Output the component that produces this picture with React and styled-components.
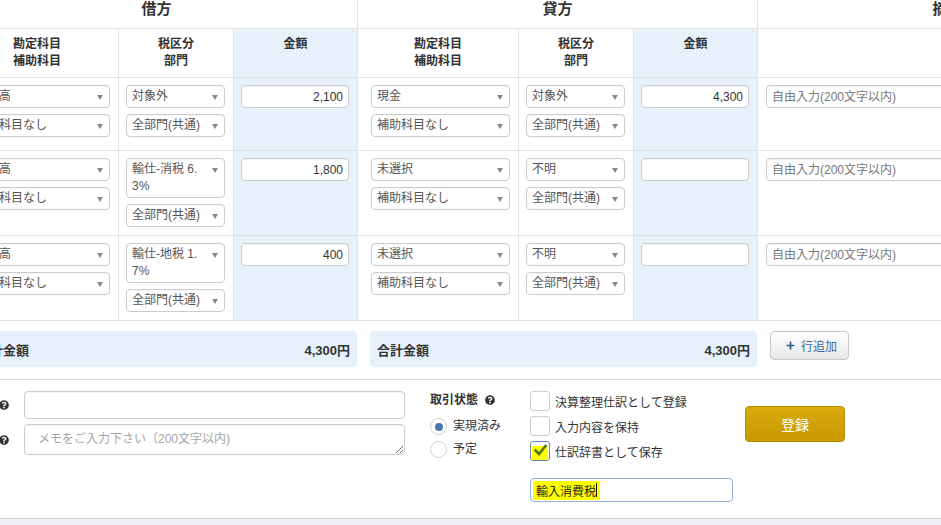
import React from 'react';
import styled, { createGlobalStyle } from 'styled-components';
import { FaQuestionCircle, FaPlus } from 'react-icons/fa';

const COLS = '163px 115px 124px 161px 115px 124px 380px';
const LINE = '#e4e4e4';
const BLUE = '#e7f1fc';

const GlobalStyle = createGlobalStyle`
  *, *::before, *::after { box-sizing: border-box; }
  html, body { margin: 0; padding: 0; }
  body {
    background: #eef0f3;
    font-family: "Liberation Sans", "Noto Sans CJK JP", sans-serif;
    font-size: 12px;
    color: #333;
    overflow: hidden;
  }
  #root { width: 941px; height: 525px; overflow: hidden; }
`;

const Page = styled.div`
  width: 1182px;
  margin-left: -44px;
  background: #fff;
`;

const HeadTop = styled.div`
  display: grid;
  grid-template-columns: ${COLS};
  height: 29px;
`;

const GroupTitle = styled.div`
  grid-column: span ${(p) => p.$span || 1};
  border-right: 1px solid ${LINE};
  border-bottom: 1px solid ${LINE};
  font-size: 15px;
  font-weight: bold;
  line-height: 18px;
  text-align: center;
`;

const HeadRow = styled.div`
  display: grid;
  grid-template-columns: ${COLS};
  height: 49px;
`;

const HeadCell = styled.div`
  border-right: 1px solid ${LINE};
  border-bottom: 1px solid ${LINE};
  background: ${(p) => (p.$blue ? BLUE : '#fff')};
  font-weight: bold;
  line-height: 17px;
  padding-top: 7px;
  text-align: center;
`;

const DataRow = styled.div`
  display: grid;
  grid-template-columns: ${COLS};
  min-height: 73px;
`;

const Cell = styled.div`
  display: flex;
  flex-direction: column;
  gap: 6px;
  border-right: 1px solid ${LINE};
  border-bottom: 1px solid ${LINE};
  background: ${(p) => (p.$blue ? BLUE : '#fff')};
  padding: 7px 8px 8px ${(p) => (p.$pl != null ? p.$pl : 7)}px;
`;

const SelectBox = styled.div`
  display: flex;
  justify-content: space-between;
  align-items: flex-start;
  border: 1px solid #ccc;
  border-radius: 4px;
  background: #fff;
  padding: 2px 6px 2px 5px;
  line-height: 17px;
  color: #555;
  white-space: nowrap;
  box-shadow: inset 0 1px 1px rgba(0, 0, 0, 0.03);
`;

const Caret = styled.span`
  flex: none;
  margin-top: 7px;
  width: 0;
  height: 0;
  border-left: 3px solid transparent;
  border-right: 3px solid transparent;
  border-top: 5px solid #8a8a8a;
`;

const AmountInput = styled.input`
  height: 23px;
  width: 100%;
  border: 1px solid #ccc;
  border-radius: 4px;
  padding: 0 5px;
  text-align: right;
  font: inherit;
  color: #333;
  background: #fff;
  box-shadow: inset 0 1px 1px rgba(0, 0, 0, 0.06);
  outline: none;
`;

const NoteInput = styled(AmountInput)`
  text-align: left;
  &::placeholder { color: #777; }
`;

const TotalsRow = styled.div`
  display: flex;
  align-items: flex-start;
  gap: 13px;
  padding: 10px 0 12px 14px;
  border-bottom: 1px solid #dcdcdc;
  height: 59px;
`;

const TotalBar = styled.div`
  width: 387px;
  height: 36px;
  border-radius: 4px;
  background: ${BLUE};
  display: flex;
  align-items: center;
  justify-content: space-between;
  padding: 0 7px;
  font-size: 13px;
  font-weight: bold;
  color: #333;
`;

const AddButton = styled.button`
  width: 79px;
  height: 29px;
  border: 1px solid #c8c8c8;
  border-radius: 4px;
  background: linear-gradient(#ffffff, #e8e8e8);
  display: flex;
  align-items: center;
  justify-content: center;
  gap: 6px;
  font: inherit;
  color: #3a68a2;
  padding: 0 0 0 4px;
  svg { color: #2d5a8e; }
`;

const Bottom = styled.div`
  display: flex;
  align-items: flex-start;
  padding-top: 11px;
  height: 139px;
  border-bottom: 1px solid #d3d5d8;
`;

const Fields = styled.div`
  display: grid;
  grid-template-columns: 53px 381px;
  grid-template-rows: 28px 31px;
  column-gap: 15px;
  row-gap: 5px;
`;

const FieldLabel = styled.div`
  display: flex;
  align-items: center;
  justify-content: flex-end;
  gap: 4px;
  font-weight: bold;
  white-space: nowrap;
  svg { flex: none; }
`;

const TextInput = styled.input`
  height: 28px;
  width: 100%;
  border: 1px solid #ccc;
  border-radius: 4px;
  box-shadow: inset 0 1px 1px rgba(0, 0, 0, 0.06);
  font: inherit;
  padding: 0 10px;
  outline: none;
`;

const MemoArea = styled.textarea`
  height: 31px;
  width: 100%;
  border: 1px solid #ccc;
  border-radius: 4px;
  box-shadow: inset 0 1px 1px rgba(0, 0, 0, 0.06);
  font: inherit;
  line-height: 17px;
  padding: 6px 13px;
  outline: none;
  &::placeholder { color: #a5a5a5; }
`;

const StatusBlock = styled.div`
  margin-left: 25px;
  width: 100px;
`;

const StatusLabel = styled.div`
  display: flex;
  align-items: center;
  gap: 7px;
  line-height: 18px;
  font-weight: bold;
`;

const RadioList = styled.div`
  margin-top: 9px;
  display: flex;
  flex-direction: column;
`;

const RadioRow = styled.label`
  display: flex;
  align-items: flex-start;
  gap: 6px;
  height: 23px;
  line-height: 17px;
`;

const RadioCircle = styled.span`
  flex: none;
  width: 17px;
  height: 17px;
  border-radius: 50%;
  border: 1px solid #cfcfcf;
  background: #fff;
  display: flex;
  align-items: center;
  justify-content: center;
  &::after {
    content: '';
    width: 8px;
    height: 8px;
    border-radius: 50%;
    background: ${(p) => (p.$on ? '#4d74b3' : 'transparent')};
  }
`;

const CheckBlock = styled.div`
  width: 203px;
  display: flex;
  flex-direction: column;
  gap: 5px;
`;

const CheckRow = styled.label`
  display: flex;
  align-items: center;
  gap: 5px;
  height: 20px;
`;

const CheckBox = styled.span`
  flex: none;
  width: 20px;
  height: 20px;
  border-radius: 3px;
  border: 1px solid ${(p) => (p.$on ? '#6a86b6' : '#cfcfcf')};
  background: #fff;
  display: flex;
  align-items: flex-end;
  justify-content: center;
  padding-bottom: 0;
`;

const Marker = styled.span`
  width: 16px;
  height: 14px;
  background: #ffff00;
  display: flex;
  justify-content: center;
  svg { margin-top: -2px; }
`;

const DictInput = styled.div`
  margin-top: 12px;
  height: 24px;
  border: 1px solid #93b1df;
  border-radius: 4px;
  display: flex;
  align-items: center;
  padding-left: 2px;
`;

const Highlight = styled.span`
  display: inline-flex;
  align-items: center;
  height: 19px;
  background: #ffff00;
  padding: 0 3px 0 3px;
  color: #222;
`;

const TextCaret = styled.span`
  width: 1px;
  height: 14px;
  background: #111;
`;

const SubmitButton = styled.button`
  margin-left: 12px;
  margin-top: 15px;
  width: 100px;
  height: 36px;
  border: 1px solid #b98f00;
  border-radius: 4px;
  background: linear-gradient(#d8aa0e, #c89900);
  color: #fff;
  font: inherit;
  font-size: 14px;
`;

const rows = [
  {
    dAcc: '仕入高', dSub: '補助科目なし', dTax: ['対象外'], dDept: '全部門(共通)', dAmt: '2,100',
    cAcc: '現金', cSub: '補助科目なし', cTax: ['対象外'], cDept: '全部門(共通)', cAmt: '4,300',
  },
  {
    dAcc: '仕入高', dSub: '補助科目なし', dTax: ['輸仕-消税 6.', '3%'], dDept: '全部門(共通)', dAmt: '1,800',
    cAcc: '未選択', cSub: '補助科目なし', cTax: ['不明'], cDept: '全部門(共通)', cAmt: '',
  },
  {
    dAcc: '仕入高', dSub: '補助科目なし', dTax: ['輸仕-地税 1.', '7%'], dDept: '全部門(共通)', dAmt: '400',
    cAcc: '未選択', cSub: '補助科目なし', cTax: ['不明'], cDept: '全部門(共通)', cAmt: '',
  },
];

function Select({ lines }) {
  return (
    <SelectBox>
      <span>
        {lines.map((l, i) => (
          <React.Fragment key={i}>
            {i > 0 && <br />}
            {l}
          </React.Fragment>
        ))}
      </span>
      <Caret />
    </SelectBox>
  );
}

function Check({ on, children }) {
  return (
    <CheckRow>
      <CheckBox $on={on}>
        {on && (
          <Marker>
            <svg width="13" height="12" viewBox="0 0 13 12">
              <path d="M1.5 6.5 L5 10 L11.5 2" fill="none" stroke="#4a7617" strokeWidth="2.6" strokeLinecap="square" />
            </svg>
          </Marker>
        )}
      </CheckBox>
      <span>{children}</span>
    </CheckRow>
  );
}

export default function App() {
  return (
    <>
      <GlobalStyle />
      <Page>
        <HeadTop>
          <GroupTitle $span={3}>借方</GroupTitle>
          <GroupTitle $span={3}>貸方</GroupTitle>
          <GroupTitle>摘要</GroupTitle>
        </HeadTop>
        <HeadRow>
          <HeadCell>勘定科目<br />補助科目</HeadCell>
          <HeadCell>税区分<br />部門</HeadCell>
          <HeadCell $blue>金額</HeadCell>
          <HeadCell>勘定科目<br />補助科目</HeadCell>
          <HeadCell>税区分<br />部門</HeadCell>
          <HeadCell $blue>金額</HeadCell>
          <HeadCell />
        </HeadRow>
        {rows.map((r, i) => (
          <DataRow key={i}>
            <Cell $pl={13}>
              <Select lines={[r.dAcc]} />
              <Select lines={[r.dSub]} />
            </Cell>
            <Cell>
              <Select lines={r.dTax} />
              <Select lines={[r.dDept]} />
            </Cell>
            <Cell $blue>
              <AmountInput defaultValue={r.dAmt} />
            </Cell>
            <Cell $pl={13}>
              <Select lines={[r.cAcc]} />
              <Select lines={[r.cSub]} />
            </Cell>
            <Cell>
              <Select lines={r.cTax} />
              <Select lines={[r.cDept]} />
            </Cell>
            <Cell $blue>
              <AmountInput defaultValue={r.cAmt} />
            </Cell>
            <Cell $pl={8}>
              <NoteInput placeholder="自由入力(200文字以内)" />
            </Cell>
          </DataRow>
        ))}
        <TotalsRow>
          <TotalBar>
            <span>合計金額</span>
            <span>4,300円</span>
          </TotalBar>
          <TotalBar>
            <span>合計金額</span>
            <span>4,300円</span>
          </TotalBar>
          <AddButton>
            <FaPlus size={9} />
            <span>行追加</span>
          </AddButton>
        </TotalsRow>
        <Bottom>
          <Fields>
            <FieldLabel>
              <span>品目</span>
              <FaQuestionCircle size={10} />
            </FieldLabel>
            <TextInput />
            <FieldLabel>
              <span>メモ</span>
              <FaQuestionCircle size={10} />
            </FieldLabel>
            <MemoArea placeholder="メモをご入力下さい（200文字以内)" />
          </Fields>
          <StatusBlock>
            <StatusLabel>
              <span>取引状態</span>
              <FaQuestionCircle size={10} />
            </StatusLabel>
            <RadioList>
              <RadioRow>
                <RadioCircle $on />
                <span>実現済み</span>
              </RadioRow>
              <RadioRow>
                <RadioCircle />
                <span>予定</span>
              </RadioRow>
            </RadioList>
          </StatusBlock>
          <CheckBlock>
            <Check>決算整理仕訳として登録</Check>
            <Check>入力内容を保持</Check>
            <Check on>仕訳辞書として保存</Check>
            <DictInput>
              <Highlight>
                輸入消費税
                <TextCaret />
              </Highlight>
            </DictInput>
          </CheckBlock>
          <SubmitButton>登録</SubmitButton>
        </Bottom>
      </Page>
    </>
  );
}
